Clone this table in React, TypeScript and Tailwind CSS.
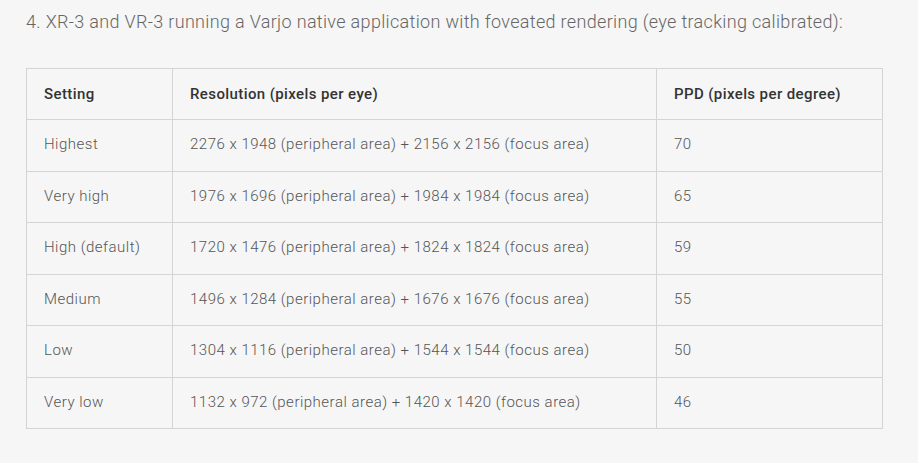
import React from 'react';

const rows = [
    ['Highest', '2276 x 1948 (peripheral area) + 2156 x 2156 (focus area)', '70'],
    ['Very high', '1976 x 1696 (peripheral area) + 1984 x 1984 (focus area)', '65'],
    ['High (default)', '1720 x 1476 (peripheral area) + 1824 x 1824 (focus area)', '59'],
    ['Medium', '1496 x 1284 (peripheral area) + 1676 x 1676 (focus area)', '55'],
    ['Low', '1304 x 1116 (peripheral area) + 1544 x 1544 (focus area)', '50'],
    ['Very low', '1132 x 972 (peripheral area) + 1420 x 1420 (focus area)', '46'],
];

export default function App() {
    return (
        <div className="min-h-[463px] w-[918px] bg-[#f6f6f6] px-[26px] pt-[9px] font-['Roboto',sans-serif]">
            <p className="text-[18px] font-light leading-[26px] tracking-[0.33px] text-[#666]">
                4. XR-3 and VR-3 running a Varjo native application with foveated rendering (eye tracking calibrated):
            </p>

            <table className="mt-[33px] w-[857px] border-collapse text-[15px] font-light text-[#555]">
                <thead className="tracking-[0.4px]">
                    <tr className="h-[51px]">
                        <th className="w-[146px] border border-[#d4d4d4] px-[17px] text-left font-medium text-[#333]">Setting</th>
                        <th className="w-[484px] border border-[#d4d4d4] px-[17px] text-left font-medium text-[#333]">Resolution (pixels per eye)</th>
                        <th className="border border-[#d4d4d4] px-[17px] text-left font-medium text-[#333]">PPD (pixels per degree)</th>
                    </tr>
                </thead>
                <tbody className="tracking-[0.5px]">
                    {rows.map((r) => (
                        <tr key={r[0]} className="h-[51.5px]">
                            <td className="border border-[#d4d4d4] px-[17px] pb-[2px]">{r[0]}</td>
                            <td className="border border-[#d4d4d4] px-[17px] pb-[2px]">{r[1]}</td>
                            <td className="border border-[#d4d4d4] px-[17px] pb-[2px]">{r[2]}</td>
                        </tr>
                    ))}
                </tbody>
            </table>
        </div>
    );
}
